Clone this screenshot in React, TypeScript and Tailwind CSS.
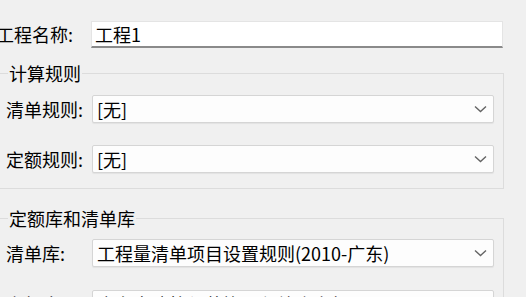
interface ComboProps {
  label: string;
  value: string;
}

function Chevron() {
  return (
    <svg width="13" height="8" viewBox="0 0 13 8" className="shrink-0">
      <polyline points="1,1.5 6.5,6.5 12,1.5" fill="none" stroke="#646464" strokeWidth="1.4" />
    </svg>
  );
}

function ComboRow({ label, value }: ComboProps) {
  return (
    <div className="flex items-center">
      <div className="w-[93px] shrink-0 pl-[7px] text-[18px] leading-[28px] text-black whitespace-nowrap">
        {label}
      </div>
      <div className="flex h-[28px] w-[402px] items-center justify-between rounded-[2px] border border-[#d5d5d5] bg-[#fdfdfd] pl-[4px] pr-[6px] shadow-[0_1px_1px_rgba(0,0,0,0.06)]">
        <span className="text-[18px] leading-[26px] text-black whitespace-nowrap">{value}</span>
        <Chevron />
      </div>
    </div>
  );
}

export default function App() {
  return (
    <div
      className="h-[297px] w-[526px] overflow-hidden bg-[#f0f0f0] pt-[21px]"
      style={{ fontFamily: '"Noto Sans CJK SC", "Noto Sans", sans-serif' }}
    >
      {/* 工程名称 */}
      <div className="flex items-center">
        <div className="-ml-[4px] w-[95px] shrink-0 text-[18px] leading-[27px] text-black whitespace-nowrap">
          工程名称:
        </div>
        <div className="flex h-[27px] w-[412px] items-center border border-b-2 border-[#e4e4e4] border-b-[#8a8a8a] bg-white pl-[3px]">
          <span className="text-[18px] leading-[24px] text-black">工程1</span>
        </div>
      </div>

      {/* 计算规则 */}
      <fieldset className="-ml-[2px] mt-[15px] w-[506px] border border-[#dcdcdc] pb-[15px]">
        <legend className="ml-[9px] px-[1px] text-[18px] leading-[20px] text-black">计算规则</legend>
        <div className="mt-[12px] flex flex-col gap-[22px]">
          <ComboRow label="清单规则:" value="[无]" />
          <ComboRow label="定额规则:" value="[无]" />
        </div>
      </fieldset>

      {/* 定额库和清单库 */}
      <fieldset className="-ml-[2px] mt-[19px] w-[506px] border border-[#dcdcdc] pb-[15px]">
        <legend className="ml-[9px] px-[1px] text-[18px] leading-[20px] text-black">定额库和清单库</legend>
        <div className="mt-[11px] flex flex-col gap-[23px]">
          <ComboRow label="清单库:" value="工程量清单项目设置规则(2010-广东)" />
          <ComboRow label="定额库:" value="广东省建筑与装饰工程综合定额(2010)" />
        </div>
      </fieldset>
    </div>
  );
}
